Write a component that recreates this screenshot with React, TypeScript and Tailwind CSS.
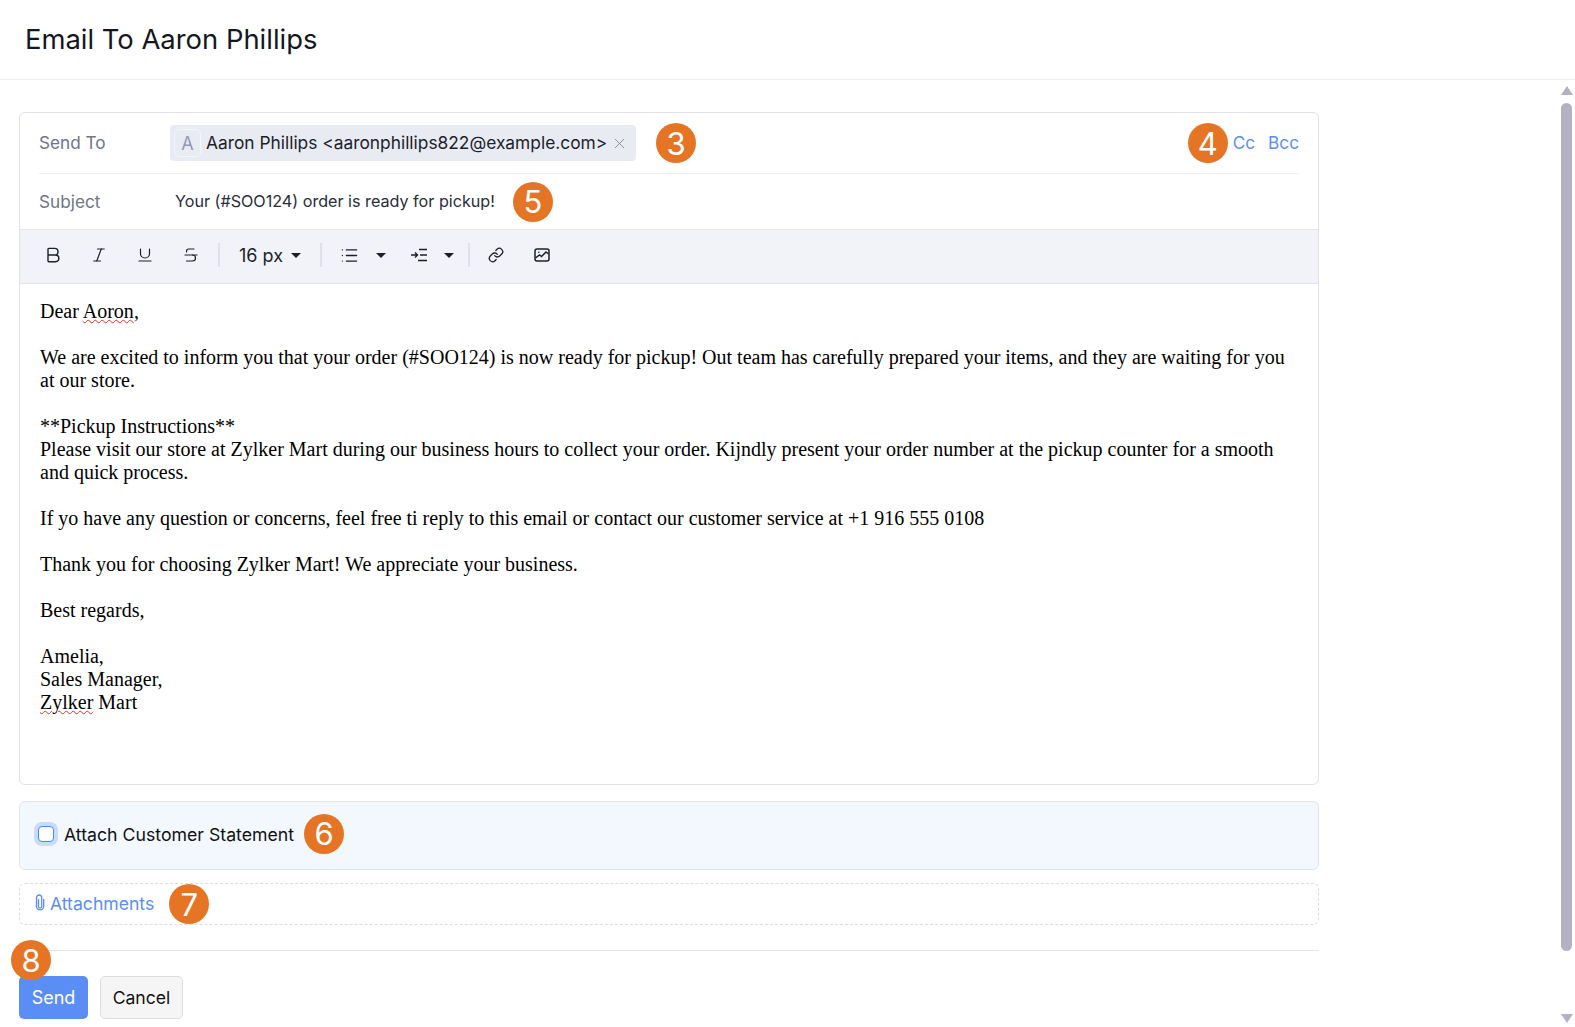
import { Bold, Italic, Link, List, Strikethrough, Underline, X } from "lucide-react";

function Badge({ n }: { n: number }) {
    return (
        <span className="flex h-10 w-10 shrink-0 items-center justify-center rounded-full bg-[#e57525] text-[31px] leading-none text-white">
            {n}
        </span>
    );
}

function Caret({ className }: { className: string }) {
    return <span className={`block h-0 w-0 border-x-[5px] border-t-[5px] border-x-transparent border-t-[#1c1f2b] ${className}`} />;
}

function Sep({ className }: { className: string }) {
    return <span className={`block h-[24px] w-[2px] bg-[#dfe1e9] ${className}`} />;
}

function IndentIcon() {
    return (
        <svg width="18" height="16" viewBox="0 0 18 16" fill="none" stroke="#1c1f2b" strokeWidth="1.4" className="ml-[24px]">
            <path d="M1 8h6M5 5.5 7.5 8 5 10.5M9 2.5h8M10 8h7M8 13.5h9" />
        </svg>
    );
}

function ImageIcon() {
    return (
        <svg width="16" height="16" viewBox="0 0 16 16" fill="none" stroke="#1c1f2b" strokeWidth="1.5" className="ml-[30px]">
            <rect x="1" y="2" width="14" height="12" rx="2" />
            <path d="M1.5 11 5.5 8l2 1.5L12 5l2.5 2" />
            <circle cx="4.8" cy="5.2" r="0.8" fill="#1c1f2b" stroke="none" />
        </svg>
    );
}

function ClipIcon() {
    return (
        <svg width="10" height="17" viewBox="0 0 10 17" fill="none" stroke="#5b8ef5" strokeWidth="1.3" className="mb-[3px]">
            <path d="M3.5 5v7.5a1.6 1.6 0 0 0 3.2 0V3.6a2.5 2.5 0 0 0-5.2 0v8.6a3.6 3.6 0 0 0 7.2 0V5" />
        </svg>
    );
}

export default function App() {
    return (
        <div className="flex h-[1027px] flex-col overflow-hidden bg-white font-['Inter',sans-serif] text-[#1c1f2b]">
            <div className="flex h-20 shrink-0 items-center border-b border-[#eceef2] pl-[25px]">
                <h1 className="text-[27.4px] font-normal text-[#15171f]">Email To Aaron Phillips</h1>
            </div>
            <div className="flex min-h-0 flex-1">
                <div className="w-[1319px] shrink-0 pl-[19px] pt-[32px]">
                    <div className="h-[673px] overflow-hidden rounded-md border border-[#e0e1ec]">
                        <div className="mx-[19px] flex h-[61px] items-center border-b border-[#eceef2]">
                            <span className="w-[131px] text-[17.2px] text-[#6f7488]">Send To</span>
                            <span className="flex h-[36px] w-[466px] items-center rounded-[4px] bg-[#e9ebf3] pl-[4px] text-[17.35px]">
                                <span className="flex h-[28px] w-[27px] shrink-0 items-center justify-center rounded-[5px] border border-[#f5f6fa] text-[18px] text-[#9299b8]">
                                    A
                                </span>
                                <span className="ml-[5px] whitespace-nowrap">Aaron Phillips &lt;aaronphillips822@example.com&gt;</span>
                                <X size={17} strokeWidth={1.2} className="ml-[4px] shrink-0 text-[#7d8192]" />
                            </span>
                            <span className="ml-[20px]">
                                <Badge n={3} />
                            </span>
                            <span className="ml-auto flex items-center text-[17.2px] text-[#5b8ef5]">
                                <Badge n={4} />
                                <span className="ml-[5px]">Cc</span>
                                <span className="ml-[13px]">Bcc</span>
                            </span>
                        </div>
                        <div className="flex h-[55px] items-center pl-[19px]">
                            <span className="w-[136px] text-[17.2px] text-[#6f7488]">Subject</span>
                            <span className="text-[16.15px] text-[#2a2d3a]">Your (#SOO124) order is ready for pickup!</span>
                            <span className="ml-[18px]">
                                <Badge n={5} />
                            </span>
                        </div>
                        <div className="flex h-[55px] items-center border-y border-[#e2e4ea] bg-[#f2f3f8] pb-[3px] pl-[23px]">
                            <Bold size={20} strokeWidth={1.7} />
                            <Italic size={18} strokeWidth={1.6} className="ml-[27px]" />
                            <Underline size={18} strokeWidth={1.6} className="ml-[28px]" />
                            <Strikethrough size={18} strokeWidth={1.6} className="ml-[28px]" />
                            <Sep className="ml-[18px]" />
                            <span className="ml-[19px] text-[18px]">16 px</span>
                            <Caret className="ml-[8px]" />
                            <Sep className="ml-[19px]" />
                            <List size={19} strokeWidth={1.6} className="ml-[18px]" />
                            <Caret className="ml-[17px]" />
                            <IndentIcon />
                            <Caret className="ml-[16px]" />
                            <Sep className="ml-[14px]" />
                            <Link size={16} strokeWidth={1.9} className="ml-[18px]" />
                            <ImageIcon />
                        </div>
                        <div className="px-[20px] pt-[16px] font-['Liberation_Serif',serif] text-[20px] leading-[23px] text-black">
                            <p>
                                Dear <span className="underline decoration-[#e8302a] decoration-wavy decoration-1">Aoron</span>,
                            </p>
                            <br />
                            <p>
                                We are excited to inform you that your order (#SOO124) is now ready for pickup! Out team has carefully prepared your items, and they are waiting for you at our store.
                            </p>
                            <br />
                            <p>**Pickup Instructions**</p>
                            <p>
                                Please visit our store at Zylker Mart during our business hours to collect your order. Kijndly present your order number at the pickup counter for a smooth and quick process.
                            </p>
                            <br />
                            <p>If yo have any question or concerns, feel free ti reply to this email or contact our customer service at +1 916 555 0108</p>
                            <br />
                            <p>Thank you for choosing Zylker Mart! We appreciate your business.</p>
                            <br />
                            <p>Best regards,</p>
                            <br />
                            <p>Amelia,</p>
                            <p>Sales Manager,</p>
                            <p>
                                <span className="underline decoration-[#e8302a] decoration-wavy decoration-1">Zylker</span> Mart
                            </p>
                        </div>
                    </div>
                    <div className="mt-[16px] flex h-[69px] items-center rounded-md border border-[#dfe3ec] bg-[#f3f8fe] pl-[18px] text-[17.7px] text-[#111]">
                        <span className="mb-[3px] h-[16px] w-[16px] rounded-[4px] border border-[#3f8cff] bg-white shadow-[0_0_0_4px_#c6dcfa]" />
                        <span className="mb-[1px] ml-[10px]">Attach Customer Statement</span>
                        <span className="mb-[4px] ml-[10px]">
                            <Badge n={6} />
                        </span>
                    </div>
                    <div className="mt-[13px] flex h-[42px] items-center rounded-md border border-dashed border-[#dcdde3] pl-[15px] text-[17.6px] text-[#5b8ef5]">
                        <ClipIcon />
                        <span className="ml-[5px]">Attachments</span>
                        <span className="ml-[15px]">
                            <Badge n={7} />
                        </span>
                    </div>
                    <div className="relative mt-[25px] border-t border-[#e4e5ea] pt-[25px]">
                        <span className="absolute -top-[11px] -left-[8px]">
                            <Badge n={8} />
                        </span>
                        <div className="flex gap-3">
                            <button className="h-[43px] w-[69px] rounded-[5px] bg-[#5b8ef5] text-[18px] text-white">Send</button>
                            <button className="h-[43px] w-[83px] rounded-[5px] border border-[#dcdde0] bg-[#f5f5f5] pt-[1px] text-[17.6px] text-[#111]">Cancel</button>
                        </div>
                    </div>
                </div>
                <div className="ml-auto flex w-[17px] flex-col items-center pt-[6px]">
                    <span className="h-0 w-0 border-x-[6px] border-b-[9px] border-x-transparent border-b-[#b4b2c2]" />
                    <span className="mt-[8px] h-[848px] w-[11px] rounded-full bg-[#b4b2c2]" />
                    <span className="mt-[63px] h-0 w-0 border-x-[6px] border-t-[9px] border-x-transparent border-t-[#b4b2c2]" />
                </div>
            </div>
        </div>
    );
}
